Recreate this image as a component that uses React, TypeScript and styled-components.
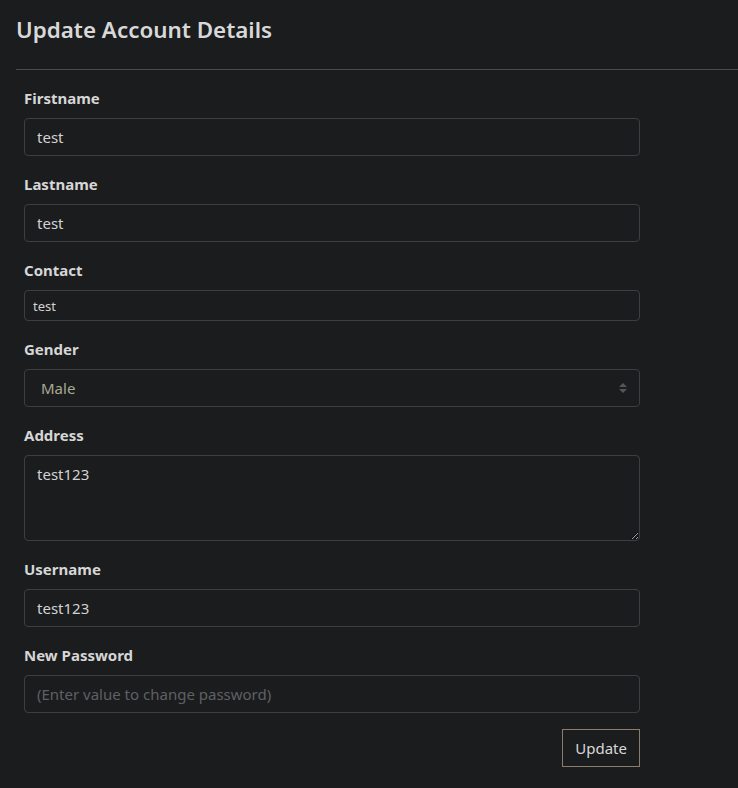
import React from "react";
import styled, { createGlobalStyle } from "styled-components";

const Global = createGlobalStyle`
  html, body { margin: 0; padding: 0; background: #1b1c1e; }
  body { font-family: "Noto Sans", "Open Sans", sans-serif; color: #d4d4d4; }
  * { box-sizing: border-box; }
`;

const Page = styled.div`
  min-height: 788px;
  padding: 14px 0 0 16px;
`;

const Title = styled.h1`
  margin: 0;
  font-size: 22.4px;
  font-weight: 600;
  line-height: 32px;
  color: #d8d8d8;
`;

const Rule = styled.hr`
  margin: 23px 0 0 0;
  border: none;
  border-top: 1px solid #4a4b4d;
  height: 0;
`;

const Form = styled.form`
  display: flex;
  flex-direction: column;
  gap: 16px;
  width: 624px;
  padding: 16px 0 0 8px;
`;

const Group = styled.div`
  display: flex;
  flex-direction: column;
  gap: 8px;
`;

const Label = styled.label`
  font-size: 15px;
  font-weight: 700;
  line-height: 24px;
  color: #d6d6d6;
`;

const Input = styled.input<{ $small?: boolean }>`
  width: 616px;
  height: ${(p) => (p.$small ? 31 : 38)}px;
  background: #1b1c1e;
  border: 1px solid #3d3e41;
  border-radius: 4px;
  padding: 0 ${(p) => (p.$small ? 8 : 12)}px;
  font-family: "Noto Sans", "Open Sans", sans-serif;
  font-size: ${(p) => (p.$small ? 13 : 15)}px;
  color: #d2d2d2;
  outline: none;
  &::placeholder { color: #5f6064; }
`;

const SelectWrap = styled.div`
  position: relative;
  width: 616px;
`;

const Select = styled.select`
  width: 616px;
  height: 38px;
  appearance: none;
  background: #1b1c1e;
  border: 1px solid #3d3e41;
  border-radius: 4px;
  padding: 0 16px;
  font-family: "Noto Sans", "Open Sans", sans-serif;
  font-size: 15px;
  color: #a9aa92;
  outline: none;
`;

const Arrows = styled.svg`
  position: absolute;
  right: 12px;
  top: 13px;
  pointer-events: none;
`;

const TextArea = styled.textarea`
  width: 616px;
  height: 86px;
  background: #1b1c1e;
  border: 1px solid #3d3e41;
  border-radius: 4px;
  padding: 6px 12px;
  font-family: "Noto Sans", "Open Sans", sans-serif;
  font-size: 15px;
  line-height: 24px;
  color: #d2d2d2;
  outline: none;
  resize: vertical;
  display: block;
`;

const Actions = styled.div`
  display: flex;
  justify-content: flex-end;
  width: 616px;
`;

const Button = styled.button`
  height: 38px;
  padding: 0 12px;
  background: transparent;
  border: 1px solid #8a7d6c;
  border-radius: 0;
  font-family: "Noto Sans", "Open Sans", sans-serif;
  font-size: 15px;
  color: #d8d8d8;
  cursor: pointer;
`;

export default function App() {
  return (
    <>
      <Global />
      <Page>
        <Title>Update Account Details</Title>
        <Rule />
        <Form onSubmit={(e) => e.preventDefault()}>
          <Group>
            <Label>Firstname</Label>
            <Input defaultValue="test" />
          </Group>
          <Group>
            <Label>Lastname</Label>
            <Input defaultValue="test" />
          </Group>
          <Group>
            <Label>Contact</Label>
            <Input $small defaultValue="test" />
          </Group>
          <Group>
            <Label>Gender</Label>
            <SelectWrap>
              <Select defaultValue="Male">
                <option>Male</option>
                <option>Female</option>
              </Select>
              <Arrows width="10" height="12" viewBox="0 0 10 12">
                <path d="M5 1 L9 5 L1 5 Z" fill="#55565a" />
                <path d="M1 7 L9 7 L5 11 Z" fill="#55565a" />
              </Arrows>
            </SelectWrap>
          </Group>
          <Group>
            <Label>Address</Label>
            <TextArea defaultValue="test123" />
          </Group>
          <Group>
            <Label>Username</Label>
            <Input defaultValue="test123" />
          </Group>
          <Group>
            <Label>New Password</Label>
            <Input type="password" placeholder="(Enter value to change password)" />
          </Group>
          <Actions>
            <Button type="submit">Update</Button>
          </Actions>
        </Form>
      </Page>
    </>
  );
}
